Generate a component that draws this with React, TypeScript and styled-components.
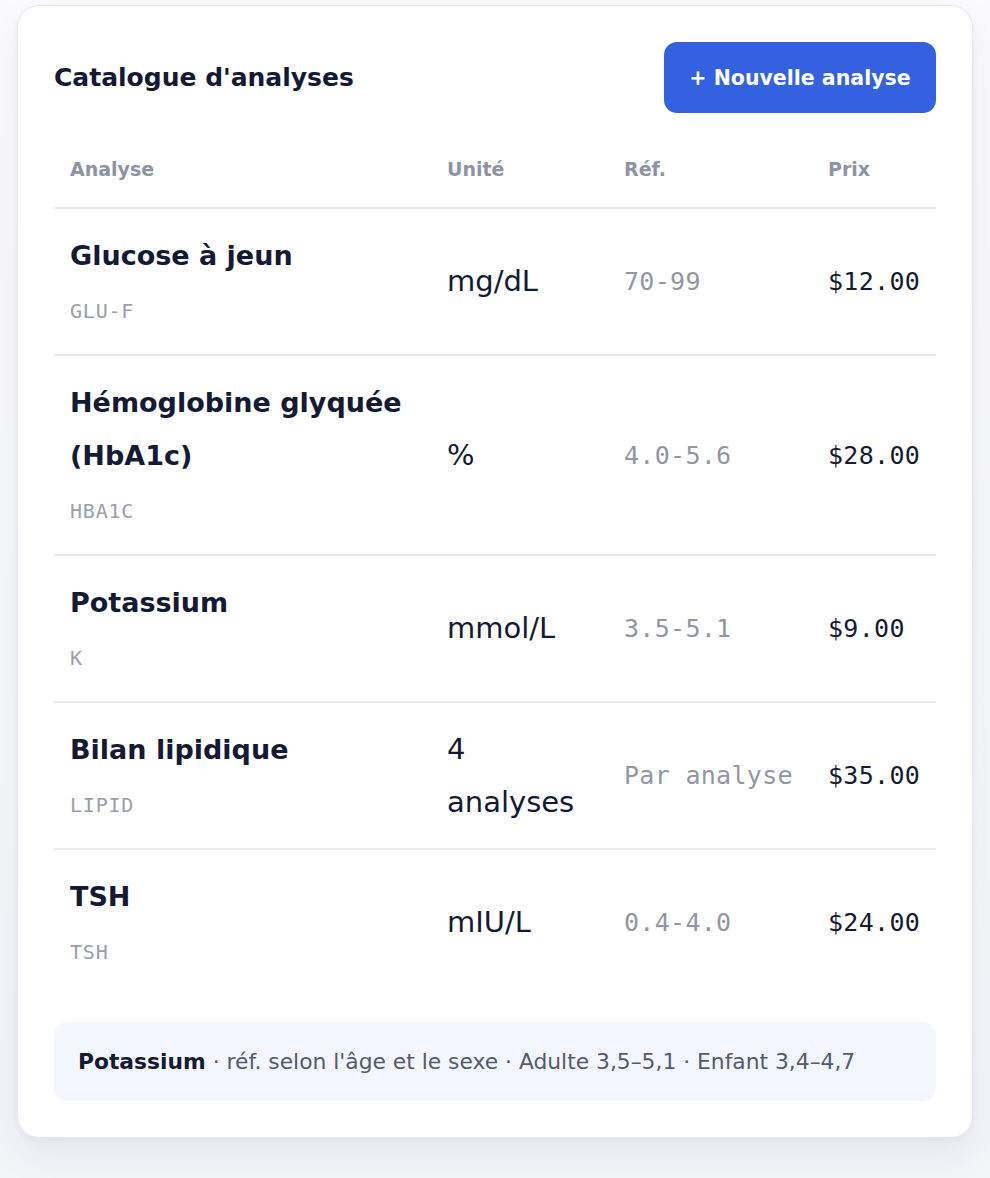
import React from "react"
import styled, { createGlobalStyle } from "styled-components"

interface Analysis {
  name: string
  code: string
  unit: string
  ref: string
  price: string
}

const analyses: Analysis[] = [
  { name: "Glucose à jeun", code: "GLU-F", unit: "mg/dL", ref: "70-99", price: "$12.00" },
  { name: "Hémoglobine glyquée (HbA1c)", code: "HBA1C", unit: "%", ref: "4.0-5.6", price: "$28.00" },
  { name: "Potassium", code: "K", unit: "mmol/L", ref: "3.5-5.1", price: "$9.00" },
  { name: "Bilan lipidique", code: "LIPID", unit: "4 analyses", ref: "Par analyse", price: "$35.00" },
  { name: "TSH", code: "TSH", unit: "mIU/L", ref: "0.4-4.0", price: "$24.00" },
]

const GlobalStyle = createGlobalStyle`
  html, body {
    margin: 0;
    padding: 0;
    background: #f7f8fb;
  }
  body {
    font-family: "DejaVu Sans", "Open Sans", sans-serif;
    color: #151a33;
  }
`

export default function App() {
  return (
    <>
      <GlobalStyle />
      <Page>
        <Card>
          <Header>
            <Title>Catalogue d'analyses</Title>
            <AddButton type="button">+ Nouvelle analyse</AddButton>
          </Header>
          <Table>
            <colgroup>
              <col style={{ width: 377 }} />
              <col style={{ width: 177 }} />
              <col style={{ width: 204 }} />
              <col />
            </colgroup>
            <thead>
              <tr>
                <HeadCell>Analyse</HeadCell>
                <HeadCell>Unité</HeadCell>
                <HeadCell>Réf.</HeadCell>
                <HeadCell>Prix</HeadCell>
              </tr>
            </thead>
            <tbody>
              {analyses.map((a) => (
                <Row key={a.code}>
                  <NameCell>
                    <Name>{a.name}</Name>
                    <Code>{a.code}</Code>
                  </NameCell>
                  <UnitCell>{a.unit}</UnitCell>
                  <MonoCell $muted>{a.ref}</MonoCell>
                  <MonoCell>{a.price}</MonoCell>
                </Row>
              ))}
            </tbody>
          </Table>
          <Note>
            <strong>Potassium</strong> · réf. selon l'âge et le sexe · Adulte 3,5–5,1 · Enfant 3,4–4,7
          </Note>
        </Card>
      </Page>
    </>
  )
}

const Page = styled.div`
  padding: 5px 17px 40px;
  background: linear-gradient(#fbfbfd, #f4f5f9);
  min-height: 1178px;
  box-sizing: border-box;
`

const Card = styled.div`
  background: #ffffff;
  border: 1px solid #e5e7f2;
  border-radius: 22px;
  padding: 36px 36px 36px;
  box-shadow: 0 16px 40px rgba(30, 40, 90, 0.07), 0 2px 6px rgba(30, 40, 90, 0.04);
`

const Header = styled.div`
  display: flex;
  align-items: center;
  justify-content: space-between;
  margin-bottom: 18px;
`

const Title = styled.h2`
  margin: 0;
  font-size: 25px;
  font-weight: 700;
  color: #141a33;
`

const AddButton = styled.button`
  height: 71px;
  width: 272px;
  border: none;
  border-radius: 13px;
  background: #3361e0;
  color: #ffffff;
  font-family: inherit;
  font-size: 20.5px;
  font-weight: 700;
  cursor: pointer;
`

const Table = styled.table`
  width: 100%;
  border-collapse: collapse;
  table-layout: fixed;
`

const HeadCell = styled.th`
  text-align: left;
  padding: 25px 16px 24px;
  line-height: 27px;
  font-size: 19px;
  font-weight: 600;
  color: #8d92a5;
  border-bottom: 2px solid #e9eaef;
`

const Row = styled.tr`
  border-bottom: 2px solid #e9eaef;
  &:last-child {
    border-bottom: none;
  }
`

const NameCell = styled.td`
  padding: 20px 16px 29px;
  vertical-align: middle;
`

const Name = styled.div`
  font-size: 27px;
  line-height: 53px;
  font-weight: 700;
  color: #141a33;
`

const Code = styled.div`
  margin-top: 15px;
  font-family: "DejaVu Sans Mono", "Liberation Mono", monospace;
  font-size: 20px;
  line-height: 28px;
  letter-spacing: 0.8px;
  color: #9a9ea9;
`

const UnitCell = styled.td`
  padding: 0 16px;
  vertical-align: middle;
  font-size: 29px;
  line-height: 53px;
  font-weight: 500;
  color: #141a33;
`

const MonoCell = styled.td<{ $muted?: boolean }>`
  padding: 0 16px;
  vertical-align: middle;
  white-space: nowrap;
  font-family: "DejaVu Sans Mono", "Liberation Mono", monospace;
  font-size: 25px;
  letter-spacing: 0.3px;
  color: ${(p) => (p.$muted ? "#9296a3" : "#161b30")};
`

const Note = styled.div`
  margin-top: 27px;
  background: #f3f6fd;
  border-radius: 14px;
  padding: 24px 24px;
  font-size: 21.8px;
  line-height: 31px;
  color: #555a6e;

  strong {
    font-weight: 700;
    color: #141a33;
  }
`
